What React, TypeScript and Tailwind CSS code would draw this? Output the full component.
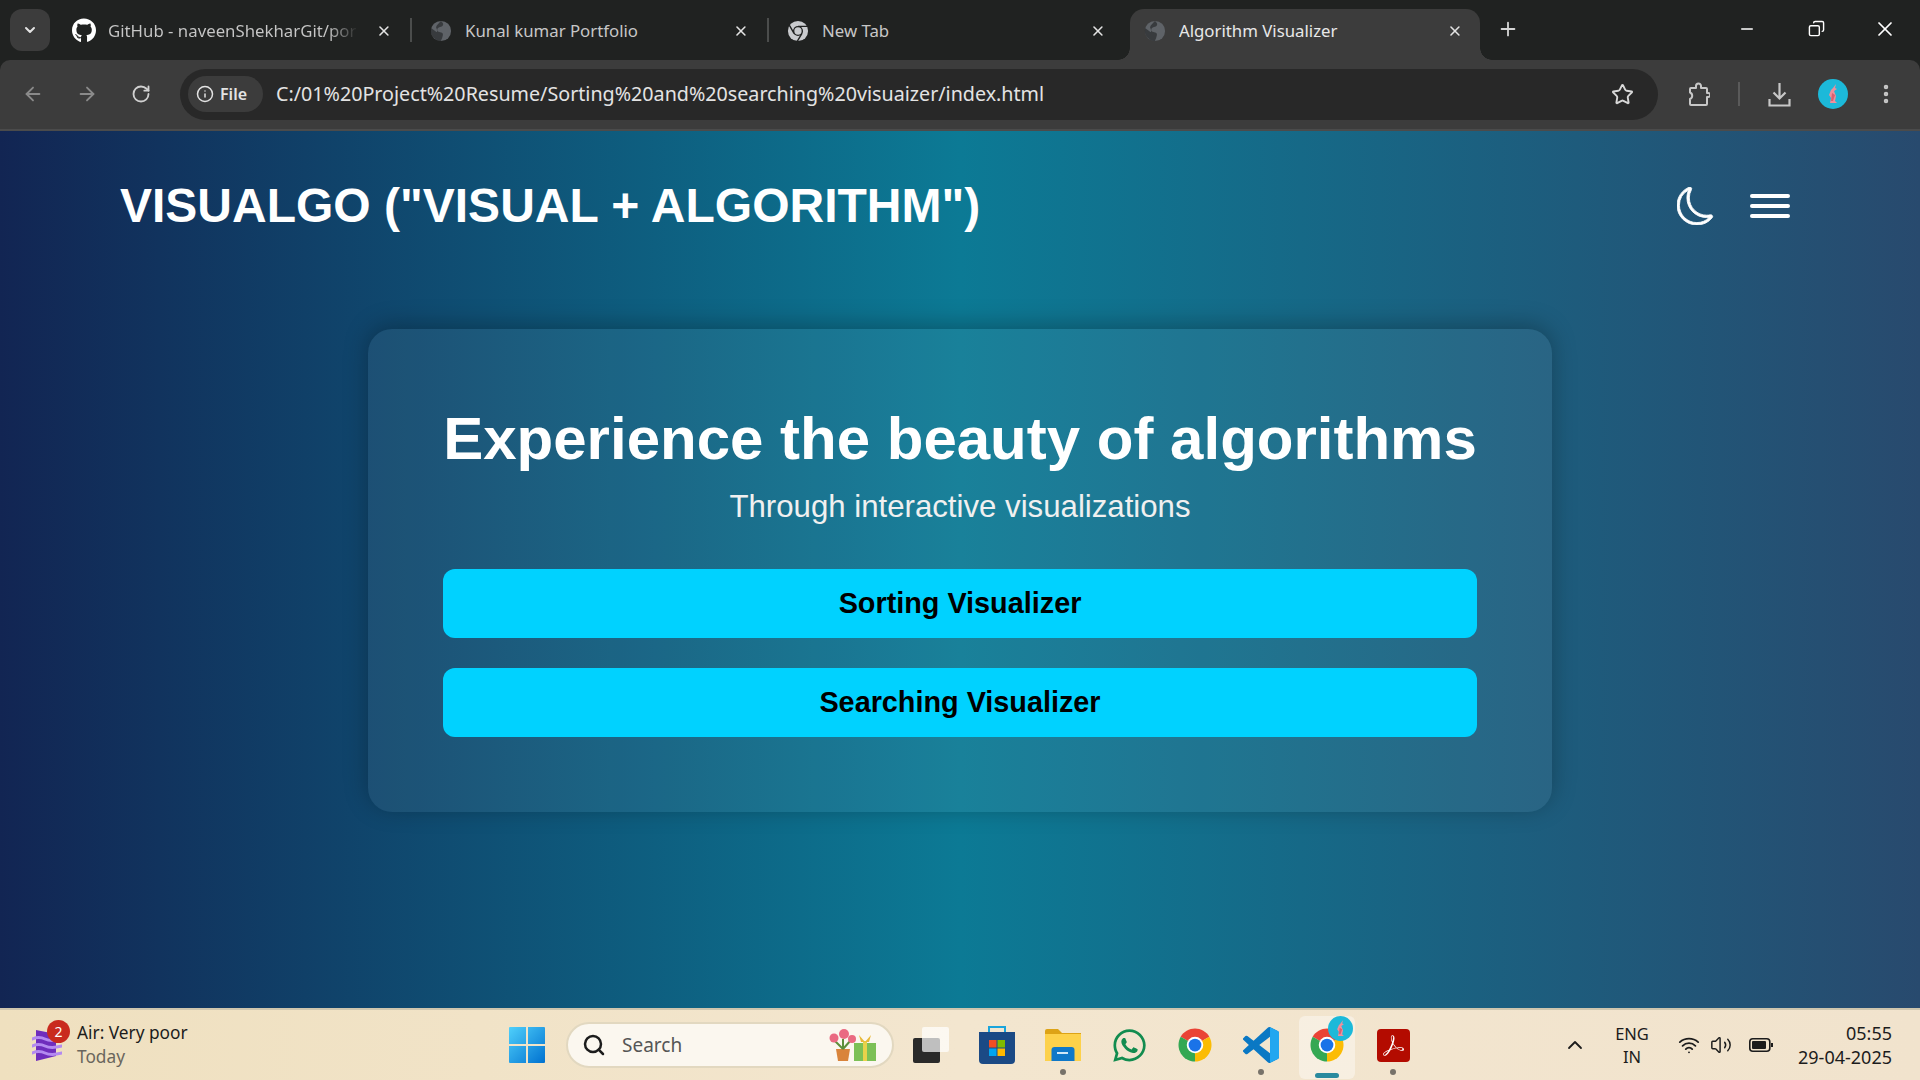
import { ArrowLeft, ArrowRight, ChevronDown, ChevronUp, Copy, EllipsisVertical, Info, Minus, Plus, RotateCw, Search, Star, Volume2, Wifi, X } from "lucide-react";
import { BsMoon } from "react-icons/bs";
import { FaGithub, FaWhatsapp } from "react-icons/fa";
import { SiAdobeacrobatreader } from "react-icons/si";

function Globe() {
  return (
    <svg viewBox="0 0 24 24" className="h-[22px] w-[22px]">
      <circle cx="12" cy="12" r="11" fill="#5f6368" />
      <path d="M12 1c2 2 3 3 2 5s-5 1-6 4 3 3 5 4 1 4-1 9C6 23 1 18 1 12c0-1 .2-2 .5-3L7 13c1 1 1-2 0-4s1-4 5-8z" fill="#2b2d30" opacity="0.75" />
    </svg>
  );
}

function ChromeLogo({ size = 36, dark = false }: { size?: number; dark?: boolean }) {
  if (dark) {
    return (
      <svg viewBox="0 0 48 48" width={size} height={size}>
        <circle cx="24" cy="24" r="22" fill="#c9cbce" />
        <path d="M24 14H46M15.3 29L5 11M32.7 29L22 47" stroke="#202221" strokeWidth="3" fill="none" />
        <circle cx="24" cy="24" r="11" fill="#202221" />
        <circle cx="24" cy="24" r="8" fill="#c9cbce" />
      </svg>
    );
  }
  return (
    <svg viewBox="0 0 48 48" width={size} height={size}>
      <path d="M24 24L4.95 13A22 22 0 0 1 43.05 13z" fill="#ea4335" />
      <path d="M24 24L43.05 13A22 22 0 0 1 24 46z" fill="#fbbc04" />
      <path d="M24 24L24 46A22 22 0 0 1 4.95 13z" fill="#34a853" />
      <circle cx="24" cy="24" r="11" fill="#fff" />
      <circle cx="24" cy="24" r="8.5" fill="#1a73e8" />
    </svg>
  );
}

function Rabbit({ className }: { className: string }) {
  return (
    <svg viewBox="0 0 30 30" className={className}>
      <circle cx="15" cy="15" r="15" fill="#1cb9d9" />
      <path d="M18 5l-1 4 2 1-3 2 2 5-1 5 2 2h-7l1-5-2-3 2-5 2-2z" fill="#ef8f9c" />
      <path d="M14 14l3 2-2 6h-2z" fill="#d9606f" />
    </svg>
  );
}

function Tab({ icon, title, active, noSep, fade }: { icon: React.ReactNode; title: string; active?: boolean; noSep?: boolean; fade?: boolean }) {
  return (
    <div className="relative flex h-full w-[357px] items-center pb-[8px] pl-[17px] pr-[20px]">
      {active && (
        <>
          <div className="absolute inset-y-0 left-[4px] right-[3px] rounded-t-[14px] bg-[#3c3c3c]" />
          <div className="absolute bottom-0 left-[-8px] h-[12px] w-[12px] bg-[radial-gradient(circle_at_0_0,transparent_11.5px,#3c3c3c_12px)]" />
          <div className="absolute bottom-0 right-[-9px] h-[12px] w-[12px] bg-[radial-gradient(circle_at_100%_0,transparent_11.5px,#3c3c3c_12px)]" />
        </>
      )}
      {!active && !noSep && <div className="absolute right-0 top-[9px] h-[24px] w-[2px] bg-[#4b4d4c]" />}
      <div className="relative flex w-[24px] shrink-0 justify-center">{icon}</div>
      <div className={`relative ml-[12px] w-[252px] overflow-hidden whitespace-nowrap text-[16.8px] ${active ? "text-[#e8e8e8]" : "text-[#c7c7c7]"}`}>
        {fade ? (
          <span className="block bg-[linear-gradient(90deg,#c7c7c7_88%,transparent_100%)] bg-clip-text text-transparent">{title}</span>
        ) : (
          title
        )}
      </div>
      <X className="relative ml-[18px] h-[16px] w-[16px] text-[#e3e3e3]" strokeWidth={2.4} />
    </div>
  );
}

function BrowserChrome() {
  return (
    <div className="shrink-0 bg-[#202221] text-[#e3e3e3]">
      <div className="flex h-[60px] items-start pt-[9px]">
        <div className="ml-[10px] mr-[5px] flex h-[42px] w-[40px] shrink-0 items-center justify-center rounded-[12px] bg-[#3c3c3c]">
          <ChevronDown className="h-[16px] w-[16px]" strokeWidth={3} />
        </div>
        <div className="flex h-[51px]">
          <Tab icon={<FaGithub className="h-[25px] w-[25px] text-white" />} title="GitHub - naveenShekharGit/por" fade />
          <Tab icon={<Globe />} title="Kunal kumar Portfolio" />
          <Tab icon={<ChromeLogo size={22} dark />} title="New Tab" noSep />
          <Tab icon={<Globe />} title="Algorithm Visualizer" active />
        </div>
        <Plus className="ml-[14px] mt-[9px] h-[22px] w-[22px] text-[#d5d5d5]" strokeWidth={2} />
        <div className="ml-auto flex text-white">
          <div className="flex w-[69px] justify-center pt-[11px] pr-[2px]"><Minus className="h-[18px] w-[18px]" /></div>
          <div className="flex w-[69px] justify-center pt-[11px]"><Copy className="h-[17px] w-[17px] -scale-x-100" /></div>
          <div className="flex w-[69px] justify-center pt-[8px] pr-[1px]"><X className="h-[24px] w-[24px]" strokeWidth={1.7} /></div>
        </div>
      </div>
      <div className="flex h-[71px] items-center rounded-t-[10px] border-b-2 border-[#4b4b4b] bg-[#3c3c3c] pb-[1px]">
        <div className="flex w-[180px] shrink-0 items-center">
          <ArrowLeft className="ml-[22px] h-[22px] w-[22px] text-[#8a8a8a]" strokeWidth={2} />
          <ArrowRight className="ml-[32px] h-[22px] w-[22px] text-[#8a8a8a]" strokeWidth={2} />
          <RotateCw className="ml-[33px] h-[20px] w-[20px] text-[#d0d0d0]" strokeWidth={2.2} />
        </div>
        <div className="flex h-[51px] w-[1478px] shrink-0 items-center rounded-full bg-[#282828] pl-[8px]">
          <div className="flex h-[36px] w-[75px] items-center gap-[6px] rounded-full bg-[#3c3c3c] pl-[8px]">
            <Info className="h-[18px] w-[18px]" strokeWidth={2} />
            <span className="text-[16px] font-semibold">File</span>
          </div>
          <span className="ml-[13px] whitespace-nowrap text-[19.7px]">C:/01%20Project%20Resume/Sorting%20and%20searching%20visuaizer/index.html</span>
          <Star className="ml-auto mr-[24px] h-[23px] w-[23px] text-[#d8d8d8]" strokeWidth={2} />
        </div>
        <svg viewBox="0 0 22 25" className="ml-[30px] h-[25px] w-[22px] text-[#c7c7c7]" fill="none" stroke="currentColor" strokeWidth="2" strokeLinejoin="round">
          <path d="M2 7a1 1 0 0 1 1-1h5V4a2.5 2.5 0 0 1 5 0v2h5a1 1 0 0 1 1 1v4h1.2a1.8 1.8 0 0 1 0 4H19v7a1 1 0 0 1-1 1H3a1 1 0 0 1-1-1v-5a3.5 3.5 0 0 0 0-6.5z" />
        </svg>
        <div className="ml-[28px] h-[24px] w-[2px] bg-[#5a5a5a]" />
        <svg viewBox="0 0 24 25" className="ml-[27px] h-[25px] w-[25px] text-[#c7c7c7]" fill="none" stroke="currentColor" strokeWidth="2.2">
          <path d="M12 1v15M6 10.5l6 6 6-6M2 17v6.5h20V17" />
        </svg>
        <Rabbit className="ml-[26px] h-[30px] w-[30px]" />
        <EllipsisVertical className="ml-[26px] h-[24px] w-[24px] text-[#c7c7c7]" strokeWidth={2.5} />
      </div>
    </div>
  );
}

function VisualizerPage() {
  return (
    <div className="flex-1 overflow-hidden bg-[linear-gradient(90deg,#122553,#0c7a95_50%,#284a6e)] font-['Liberation_Sans',Arial,sans-serif] text-white">
      <header className="flex h-[150px] items-center pl-[120px] pr-[130px]">
        <h1 className="text-[48px] font-bold leading-none">VISUALGO ("VISUAL + ALGORITHM")</h1>
        <BsMoon className="ml-auto h-[38px] w-[38px]" stroke="currentColor" strokeWidth={0.35} />
        <div className="ml-[35px] flex w-[40px] flex-col gap-[6px]">
          <div className="h-[4px] rounded-full bg-white" />
          <div className="h-[4px] rounded-full bg-white" />
          <div className="h-[4px] rounded-full bg-white" />
        </div>
      </header>
      <main className="mx-auto mt-[48px] h-[483px] w-[1184px] rounded-[24px] bg-white/[0.055] px-[75px] pt-[73px] text-center shadow-[0_-4px_24px_rgba(0,0,0,0.28)]">
        <h2 className="whitespace-nowrap text-[60px] font-bold leading-[74px]">Experience the beauty of algorithms</h2>
        <p className="mt-[12px] text-[31.2px] leading-[37px] text-[#f0f0f0]">Through interactive visualizations</p>
        <button className="mt-[44px] h-[69px] w-full rounded-[12px] bg-[#00d2ff] text-[28.8px] font-bold text-black">Sorting Visualizer</button>
        <button className="mt-[30px] h-[69px] w-full rounded-[12px] bg-[#00d2ff] text-[28.8px] font-bold text-black">Searching Visualizer</button>
      </main>
    </div>
  );
}

function Slot({ children, dot, active }: { children: React.ReactNode; dot?: boolean; active?: boolean }) {
  return (
    <div className="relative flex h-full w-[66px] items-center justify-center">
      {active && <div className="absolute inset-x-[5px] bottom-[1px] top-[6px] rounded-[6px] bg-white/40" />}
      <div className="relative">{children}</div>
      {dot && <div className="absolute bottom-[5px] left-[30px] h-[6px] w-[6px] rounded-full bg-[#77726a]" />}
      {active && <div className="absolute bottom-[2px] left-[21px] h-[5px] w-[24px] rounded-full bg-[#2a8a9e]" />}
    </div>
  );
}

function Taskbar() {
  return (
    <div className="flex h-[72px] shrink-0 items-center border-t-[2px] border-[#cfc6ae] bg-[linear-gradient(90deg,#efe0bf,#f3e6cf_50%,#f1e3cd)] font-['Noto_Sans',sans-serif] text-[#1c1c1c]">
      <div className="flex h-full w-[494px] shrink-0 items-center pl-[32px]">
        <div className="relative h-[36px] w-[30px]">
          <svg viewBox="0 0 30 36" className="h-full w-full">
            <path d="M4 3l20 4v22L4 34z" fill="#6f2dbd" />
            <path d="M0 12q7-3 13 0t17 0M0 19q7-3 13 0t17 0M0 26q7-3 13 0t17 0" fill="none" stroke="#b48af0" strokeWidth="3" strokeLinecap="round" />
          </svg>
          <div className="absolute left-[15px] top-[-7px] flex h-[23px] w-[23px] items-center justify-center rounded-full bg-[#c92a1e] text-[14px] text-white">2</div>
        </div>
        <div className="ml-[15px] leading-[24px]">
          <div className="text-[17.3px]">Air: Very poor</div>
          <div className="text-[17.3px] text-[#6a665d]">Today</div>
        </div>
      </div>
      <div className="flex h-full w-[66px] items-center justify-center">
        <svg viewBox="0 0 36 36" className="h-[36px] w-[36px]">
          <defs>
            <linearGradient id="win" x1="0" y1="0" x2="1" y2="1">
              <stop offset="0" stopColor="#4fd0fb" />
              <stop offset="1" stopColor="#0071d0" />
            </linearGradient>
          </defs>
          <path d="M0 1a1 1 0 0 1 1-1h16v17H0zM19 0h16a1 1 0 0 1 1 1v16H19zM0 19h17v17H1a1 1 0 0 1-1-1zM19 19h17v16a1 1 0 0 1-1 1H19z" fill="url(#win)" />
        </svg>
      </div>
      <div className="ml-[6px] flex h-[46px] w-[328px] items-center rounded-full border-2 border-[#e2d8c0] bg-[#fbf7ef] pl-[14px]">
        <Search className="h-[24px] w-[24px]" strokeWidth={2.5} />
        <span className="ml-[16px] text-[19px] text-[#555]">Search</span>
        <svg viewBox="0 0 48 32" className="ml-auto mr-[14px] h-[32px] w-[52px]">
          <path d="M8 20h14l-2 12H10z" fill="#d9843b" />
          <path d="M15 20V10M15 20L7 12M15 20l8-9" stroke="#5d8f3a" strokeWidth="2" fill="none" />
          <circle cx="16" cy="5" r="5" fill="#ea6a82" />
          <circle cx="6" cy="9" r="4.5" fill="#ea6a82" />
          <circle cx="24" cy="10" r="4" fill="#ea6a82" />
          <rect x="26" y="14" width="22" height="18" fill="#7cc056" />
          <rect x="35" y="12" width="4" height="20" fill="#e8d24a" />
          <path d="M37 13l-6-7 2 7zM37 13l6-7-2 7z" fill="#e8b93a" />
        </svg>
      </div>
      <div className="flex h-full items-center pl-[4px]">
        <Slot>
          <div className="relative h-[36px] w-[36px]">
            <div className="absolute bottom-0 left-0 h-[25px] w-[27px] rounded-[2px] bg-[#2a2a2a]" />
            <div className="absolute right-0 top-0 h-[25px] w-[27px] rounded-[2px] bg-white/70" />
          </div>
        </Slot>
        <Slot>
          <svg viewBox="0 0 36 38" className="h-[38px] w-[36px]">
            <path d="M10 7V1h16v6" fill="none" stroke="#1aa5dc" strokeWidth="2" />
            <path d="M0 6h36v28a4 4 0 0 1-4 4H4a4 4 0 0 1-4-4z" fill="#1b4a85" />
            <rect x="10" y="14" width="7.5" height="7.5" fill="#f04e23" />
            <rect x="18.5" y="14" width="7.5" height="7.5" fill="#80bb00" />
            <rect x="10" y="22.5" width="7.5" height="7.5" fill="#00a4ef" />
            <rect x="18.5" y="22.5" width="7.5" height="7.5" fill="#ffb900" />
          </svg>
        </Slot>
        <Slot dot>
          <svg viewBox="0 0 36 32" className="h-[32px] w-[36px]">
            <path d="M0 2a2 2 0 0 1 2-2h11l4 4h19v6H0z" fill="#dda316" />
            <path d="M0 5h36v27H0z" fill="#fdd14a" />
            <path d="M11 32v-11a3 3 0 0 1 3-3h17a3 3 0 0 1 3 3v11z" fill="#0f78c8" transform="translate(-4.5)" />
            <rect x="12" y="23" width="11" height="2" fill="#cfe7f7" />
          </svg>
        </Slot>
        <Slot><FaWhatsapp className="h-[37px] w-[37px] text-[#128c4f]" /></Slot>
        <Slot><ChromeLogo /></Slot>
        <Slot dot>
          <svg viewBox="0 0 24 24" className="h-[36px] w-[36px]">
            <path d="M23.15 2.587L18.21.21a1.494 1.494 0 0 0-1.705.29l-9.46 8.63-4.12-3.128a.999.999 0 0 0-1.276.057L.327 7.261A1 1 0 0 0 .326 8.74L3.899 12 .326 15.26a1 1 0 0 0 .001 1.479L1.65 17.94a.999.999 0 0 0 1.276.057l4.12-3.128 9.46 8.63a1.492 1.492 0 0 0 1.704.29l4.942-2.377A1.5 1.5 0 0 0 24 20.06V3.939a1.5 1.5 0 0 0-.85-1.352zm-5.146 14.861L10.826 12l7.178-5.448v10.896z" fill="#0a78c4" />
            <path d="M18.004 0.1L23.15 2.587A1.5 1.5 0 0 1 24 3.939V20.06a1.5 1.5 0 0 1-.85 1.352L18.004 23.9z" fill="#22a7f0" />
          </svg>
        </Slot>
        <Slot active>
          <div className="relative">
            <ChromeLogo />
            <Rabbit className="absolute right-[-8px] top-[-11px] h-[25px] w-[25px]" />
          </div>
        </Slot>
        <Slot dot>
          <div className="flex h-[33px] w-[33px] items-center justify-center rounded-[4px] bg-[#b30b00]">
            <SiAdobeacrobatreader className="h-[21px] w-[21px] text-white" />
          </div>
        </Slot>
      </div>
      <div className="ml-auto flex h-full items-center pr-[28px]">
        <ChevronUp className="h-[24px] w-[24px]" strokeWidth={1.8} />
        <div className="ml-[12px] w-[66px] text-center text-[16.5px] leading-[23px]">
          <div>ENG</div>
          <div>IN</div>
        </div>
        <Wifi className="ml-[12px] h-[22px] w-[24px]" strokeWidth={2} />
        <Volume2 className="ml-[9px] h-[22px] w-[22px]" strokeWidth={1.6} />
        <svg viewBox="0 0 24 14" className="ml-[17px] h-[14px] w-[24px]">
          <rect x="0.8" y="0.8" width="20" height="12.4" rx="3" fill="none" stroke="#1c1c1c" strokeWidth="1.6" />
          <rect x="3" y="3" width="14" height="8" rx="1" fill="#1c1c1c" />
          <rect x="22" y="5" width="2" height="4" fill="#1c1c1c" />
        </svg>
        <div className="ml-[21px] w-[98px] whitespace-nowrap text-right text-[18px] leading-[24px]">
          <div>05:55</div>
          <div>29-04-2025</div>
        </div>
      </div>
    </div>
  );
}

export default function App() {
  return (
    <div className="flex h-screen w-full flex-col overflow-hidden font-['Noto_Sans',sans-serif]">
      <BrowserChrome />
      <VisualizerPage />
      <Taskbar />
    </div>
  );
}
